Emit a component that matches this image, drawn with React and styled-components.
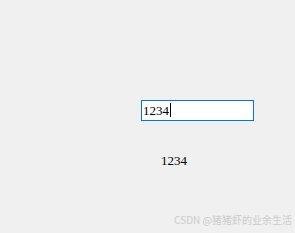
import React, { useState } from "react";
import styled, { createGlobalStyle } from "styled-components";

const Global = createGlobalStyle`
  html, body { margin: 0; padding: 0; background: #f0f0f0; }
  body { width: 295px; height: 233px; overflow: hidden; }
`;

const Page = styled.div`
  position: relative;
  width: 295px;
  height: 233px;
  background: #f0f0f0;
  display: flex;
  flex-direction: column;
  align-items: flex-start;
  padding: 100px 0 0 141px;
  box-sizing: border-box;
`;

const FieldWrap = styled.div`
  position: relative;
  width: 113px;
  height: 21px;
`;

const Field = styled.input`
  width: 113px;
  height: 21px;
  box-sizing: border-box;
  border: 1px solid #0078d7;
  background: #fff;
  padding: 0 0 0 1px;
  margin: 0;
  font-family: "Liberation Serif", serif;
  font-size: 13px;
  color: #000;
  caret-color: transparent;
  outline: none;
`;

const Caret = styled.span`
  position: absolute;
  top: 3px;
  width: 1px;
  height: 14px;
  background: #000;
  pointer-events: none;
`;

const Label = styled.div`
  margin: 32px 0 0 20px;
  font-family: "Liberation Serif", serif;
  font-size: 13px;
  line-height: 15px;
  color: #000;
`;

const Watermark = styled.div`
  position: absolute;
  right: 3px;
  bottom: 6px;
  font-family: "Noto Sans CJK SC", "Liberation Sans", sans-serif;
  font-size: 10px;
  line-height: 14px;
  color: #cccccc;
  white-space: nowrap;
`;

export default function App() {
  const [value, setValue] = useState("1234");
  return (
    <Page>
      <Global />
      <FieldWrap>
        <Field autoFocus value={value} onChange={(e) => setValue(e.target.value)} />
        <Caret style={{ left: 3 + value.length * 6.5 }} />
      </FieldWrap>
      <Label>{value}</Label>
      <Watermark>CSDN @猪猪虾的业余生活</Watermark>
    </Page>
  );
}
